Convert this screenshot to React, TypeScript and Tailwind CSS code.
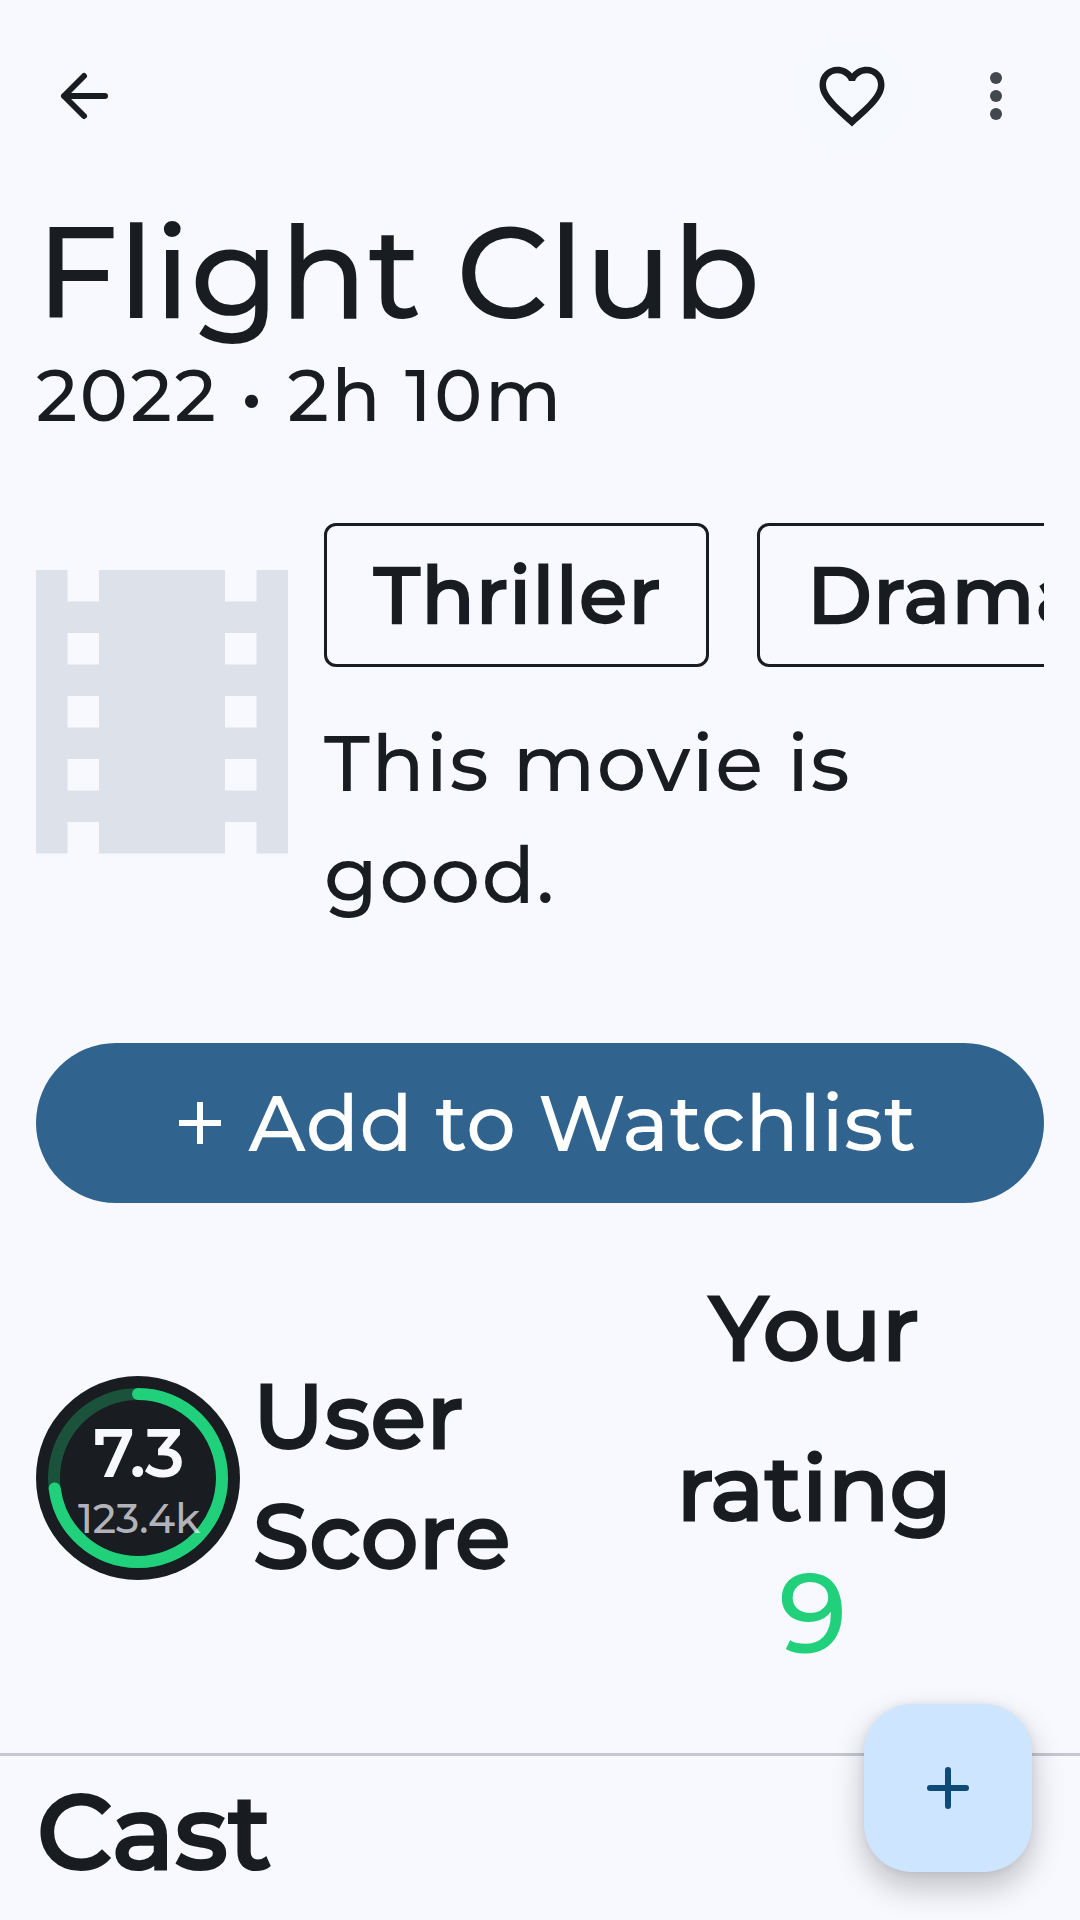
const FilmIcon = () => (
  <svg viewBox="0 0 8 9" preserveAspectRatio="none" className="mt-[47px] h-[283.5px] w-[252px] shrink-0 fill-[#dde2ea]">
    <path
      fillRule="evenodd"
      d="M0 0H1V1H2V0H6V1H7V0H8V9H7V8H6V9H2V8H1V9H0ZM1 2V3H2V2ZM1 4V5H2V4ZM1 6V7H2V6ZM6 2V3H7V2ZM6 4V5H7V4ZM6 6V7H7V6Z"
    />
  </svg>
);

const HeartIcon = () => (
  <svg viewBox="0 0 24 24" className="size-[78px] fill-[#191c20]">
    <path d="M16.5 3c-1.74 0-3.41.81-4.5 2.09C10.91 3.81 9.24 3 7.5 3 4.42 3 2 5.42 2 8.5c0 3.78 3.4 6.86 8.55 11.54L12 21.35l1.45-1.32C18.6 15.36 22 12.28 22 8.5 22 5.42 19.58 3 16.5 3zm-4.4 15.55l-.1.1-.1-.1C7.14 14.24 4 11.39 4 8.5 4 6.5 5.5 5 7.5 5c1.54 0 3.04.99 3.57 2.36h1.87C13.46 5.99 14.96 5 16.5 5c2 0 3.5 1.5 3.5 3.5 0 2.89-3.14 5.74-7.9 10.05z" />
  </svg>
);

const Chip = ({ label }: { label: string }) => (
  <div className="flex h-36 shrink-0 items-center rounded-[12px] border-[3px] border-[#191c20] pr-[44px] pb-px pl-[47px] text-[78px] leading-none tracking-[1.6px] [-webkit-text-stroke:2.4px_#191c20]">
    {label}
  </div>
);

const ScoreRing = () => (
  <div className="relative size-[204px] shrink-0 rounded-full bg-[#191c20]">
    <svg viewBox="0 0 204 204" className="size-full fill-none stroke-[#21d07a] stroke-[12]">
      <circle cx="102" cy="102" r="84" className="opacity-30" />
      <circle cx="102" cy="102" r="84" pathLength="100" strokeDasharray="73 100" strokeLinecap="round" transform="rotate(-90 102 102)" />
    </svg>
    <div className="absolute inset-0 flex flex-col items-center whitespace-nowrap pt-[37px] pl-[2px]">
      <span className="text-[66px] leading-[80px] text-[#f8f9ff] [-webkit-text-stroke:2px_#f8f9ff]">7.3</span>
      <span className="mt-[3px] text-[40.5px] leading-[46px] text-[#f8f9ff]/70">123.4k</span>
    </div>
  </div>
);

export default function App() {
  return (
    <div className="relative h-[1920px] w-[1080px] overflow-hidden bg-[#f8f9ff] font-['Montserrat','Inter',sans-serif] font-medium text-[#191c20]">
      <header className="flex h-48 items-center justify-between pr-12 pl-12">
        <button className="flex size-[72px] items-center justify-center">
          <svg viewBox="0 0 72 72" className="size-[72px] fill-none stroke-[#191c20] stroke-[6]" strokeLinecap="round" strokeLinejoin="round">
            <path d="M57 36H16M36 16L16 36L36 56" />
          </svg>
        </button>
        <div className="flex items-center gap-[50px]">
          <button className="flex size-[116px] items-center justify-center rounded-full bg-[#f6faff]">
            <HeartIcon />
          </button>
          <button className="flex size-[72px] items-center justify-center">
            <svg viewBox="0 0 72 72" className="size-[72px] fill-[#43474e]">
              <circle cx="36" cy="18" r="6" />
              <circle cx="36" cy="36" r="6" />
              <circle cx="36" cy="54" r="6" />
            </svg>
          </button>
        </div>
      </header>

      <main>
        <div className="px-9">
          <h1 className="text-[129.4px] leading-[160px]">Flight Club</h1>
          <p className="text-[72px] leading-[86px] tracking-[2.6px]">2022 • 2h 10m</p>

          <section className="mt-[85px] flex gap-9">
            <FilmIcon />
            <div className="min-w-0 flex-1">
              <div className="flex gap-12 overflow-hidden">
                <Chip label="Thriller" />
                <Chip label="Drama" />
              </div>
              <p className="mt-10 text-[78px] leading-[112px] tracking-[1.6px]">This movie is good.</p>
            </div>
          </section>

          <button className="mt-28 flex h-40 w-full items-center justify-center gap-3 rounded-full bg-[#30638e] pl-px text-white">
            <svg viewBox="0 0 72 72" className="size-[72px] fill-none stroke-white stroke-[6]">
              <path d="M36 15V57M15 36H57" />
            </svg>
            <span className="text-[78px] leading-none tracking-[0.6px]">Add to Watchlist</span>
          </button>

          <section className="mt-[45px] flex h-[505px] items-start">
            <div className="mt-[108px] flex w-[546px] items-center gap-[13px]">
              <div className="mt-1"><ScoreRing /></div>
              <p className="w-[270px] text-[90px] leading-[120px] tracking-[0.7px] [-webkit-text-stroke:2.8px_#191c20]">User Score</p>
            </div>
            <div className="flex-1 pl-[3px] text-center">
              <p className="px-20 text-[90px] leading-[160px] tracking-[0.5px] [-webkit-text-stroke:2.8px_#191c20]">Your rating</p>
              <p className="mt-[2px] pr-[3px] text-[111px] leading-[88px] text-[#21d07a]">9</p>
            </div>
          </section>
        </div>

        <section className="border-t-[3px] border-[#c3c7cf] px-[37px]">
          <h2 className="mt-px text-[105px] leading-[149px] tracking-[0.5px] [-webkit-text-stroke:3.2px_#191c20]">Cast</h2>
        </section>
      </main>

      <button className="absolute right-12 bottom-12 flex size-[168px] items-center justify-center rounded-[48px] bg-[#cee5ff] shadow-[0_15px_32px_rgba(0,0,0,0.24),0_0_9px_rgba(0,0,0,0.07)]">
        <svg viewBox="0 0 72 72" className="size-[72px] fill-none stroke-[#0d4a75] stroke-[6]" strokeLinecap="round">
          <path d="M36 18V54M18 36H54" />
        </svg>
      </button>
    </div>
  );
}
